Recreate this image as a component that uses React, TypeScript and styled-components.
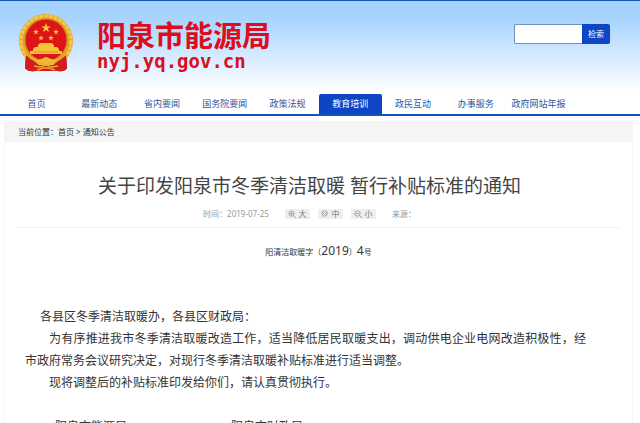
import React from "react";
import styled, { createGlobalStyle } from "styled-components";

const Global = createGlobalStyle`
  * { box-sizing: border-box; }
  html, body, #root { height: 100%; }
  body {
    margin: 0;
    background: #fff;
    color: #333;
    font-family: "Noto Sans", "Noto Sans CJK SC", sans-serif;
    overflow: hidden;
  }
  a { color: inherit; text-decoration: none; }
`;

const Page = styled.div`
  height: 100%;
  overflow: hidden;
`;

const Header = styled.header`
  display: flex;
  align-items: flex-start;
  height: 94px;
  padding: 10px 30px 0 17px;
  border-top: 1px solid #1556b0;
  background: linear-gradient(#a4d1fd 0, #a8d4fe 18px, #fcfeff 88px, #fff);
`;

const Brand = styled.div`
  margin-left: 22px;
  color: #dd0d20;
`;

const SiteName = styled.h1`
  margin: 6px 0 0;
  font-size: 29px;
  line-height: 34px;
  font-weight: 700;
  font-family: "Noto Sans CJK SC", sans-serif;
`;

const Domain = styled.div`
  font: bold 19px/20px "DejaVu Sans Mono", monospace;
`;

const Search = styled.form`
  display: flex;
  width: 96px;
  height: 20px;
  margin: 13px 0 0 auto;
`;

const SearchInput = styled.input`
  flex: 1;
  min-width: 0;
  border: 1px solid #7193bd;
  border-right: 0;
  border-radius: 2px 0 0 2px;
  background: #fff;
  font-size: 9px;
  outline: 0;
`;

const SearchButton = styled.button`
  width: 28px;
  padding: 0;
  border: 0;
  border-radius: 0 2px 2px 0;
  background: #0d45c5;
  color: #fff;
  font: 8px/18px "Noto Sans CJK SC", sans-serif;
`;

const Nav = styled.nav`
  display: grid;
  grid-template-columns: repeat(9, 1fr);
  padding: 0 70px 0 5px;
  border-bottom: 2px solid #1354bd;
`;

const NavLink = styled.a<{ $active?: boolean }>`
  height: 20px;
  border-radius: 2px 2px 0 0;
  background: ${(p) => (p.$active ? "#0d45c5" : "transparent")};
  color: ${(p) => (p.$active ? "#fff" : "#2b56a5")};
  font-size: 9px;
  line-height: 20px;
  text-align: center;
  white-space: nowrap;
`;

const Panel = styled.main`
  margin: 5px 7px 0 4px;
  border: 1px solid #f5f5f5;
  border-width: 0 1px;
  padding-bottom: 20px;
`;

const Crumbs = styled.div`
  padding: 0 13px;
  background: #f5f5f5;
  font-size: 8px;
  line-height: 21px;
`;

const Title = styled.h2`
  margin: 29px 0 0;
  padding-right: 18px;
  color: #444;
  font-size: 19px;
  line-height: 30px;
  font-weight: 400;
  text-align: center;
`;

const Meta = styled.div`
  display: flex;
  justify-content: center;
  align-items: center;
  gap: 8px;
  height: 27px;
  margin: 0 12px;
  padding: 0 18px 1px 0;
  border-bottom: 1px solid #f3f3f3;
  color: #999;
  font-size: 8px;
  line-height: 10px;
`;

const Stamp = styled.span`
  margin-right: 8px;
`;

const Source = styled.span`
  margin-left: 8px;
`;

const SizeButton = styled.button`
  display: flex;
  align-items: center;
  justify-content: center;
  gap: 2px;
  width: 25px;
  height: 10px;
  padding: 0;
  border: 0;
  background: #eee;
  color: #777;
  font: 8px/10px "Noto Sans CJK SC", sans-serif;
`;

const DocNumber = styled.p`
  margin: 13px 0 0;
  font-size: 8px;
  line-height: 20px;
  text-align: center;
`;

const Figure = styled.span`
  font-size: 12px;
`;

const Article = styled.article`
  margin-top: 44px;
  padding: 0 46px 0 20px;
  color: #333;
  font-size: 12px;
  line-height: 22px;
`;

const Salutation = styled.p`
  margin: 0;
  padding-left: 15px;
`;

const Paragraph = styled.p`
  margin: 0;
  text-indent: 24px;
  text-align: justify;
`;

const Signatures = styled.div`
  display: flex;
  gap: 104px;
  margin-top: 22px;
  padding-left: 30px;
`;

const nav = ["首页", "最新动态", "省内要闻", "国务院要闻", "政策法规", "教育培训", "政民互动", "办事服务", "政府网站年报"];

const Star = ({ x, y, r }: { x: number; y: number; r: number }) => {
  const points = Array.from({ length: 10 }, (_, i) => {
    const d = i % 2 ? r * 0.4 : r;
    const a = (Math.PI * i) / 5 - Math.PI / 2;
    return `${x + d * Math.cos(a)},${y + d * Math.sin(a)}`;
  }).join(" ");
  return <polygon points={points} fill="#fbc63c" />;
};

const Emblem = () => (
  <svg width="58" height="64" viewBox="0 0 58 64" role="img" aria-label="国徽">
    <path d="M9 42 L8 57 Q11 61 18 60 H41 Q48 61 50 57 L49 42Z" fill="#c91a1b" />
    <circle cx="29" cy="30" r="27" fill="#e0a428" />
    <circle cx="29" cy="30" r="25" fill="none" stroke="#f5c945" strokeWidth="3" strokeDasharray="4 1" />
    <circle cx="29" cy="29" r="21" fill="#de1517" stroke="#c9881c" />
    <Star x={29} y={17} r={5} />
    <Star x={19} y={21} r={3} />
    <Star x={39} y={21} r={3} />
    <Star x={24} y={27} r={3} />
    <Star x={34} y={27} r={3} />
    <path d="M21 34 L23 32 H35 L37 34 V36 H21Z M18 36 H40 L42 38 V40 H45 V43 H13 V40 H16 V38Z" fill="#f6c33a" />
    <path d="M17 41 H41" stroke="#d8921f" />
    <path d="M13 46 Q20 50 24 48 L29 46 L34 48 Q38 50 45 46 L42 50 Q36 53 29 53 Q22 53 16 50Z" fill="#e8af30" />
    <path d="M9 44 Q13 48 17 50 L22 54 H36 L41 50 Q45 48 49 44 L50 57 Q48 61 41 60 H18 Q11 61 8 57Z" fill="#d51b1b" />
    <path d="M18 49 Q23 50 29 46 Q35 50 40 49 Q36 53 29 53 Q22 53 18 49Z" fill="#efb935" />
    <path d="M17 55 L23 56 L29 54 L35 56 L41 55 M20 59 L26 57 H32 L38 59" fill="none" stroke="#e6ab35" strokeWidth="1.4" />
  </svg>
);

const Lens = ({ mark }: { mark: string }) => (
  <svg width="8" height="8" viewBox="0 0 9 9" fill="none" stroke="#999" aria-hidden="true">
    <circle cx="4" cy="4" r="3" />
    <path d={mark} />
  </svg>
);

export default function App() {
  return (
    <Page>
      <Global />
      <Header>
        <Emblem />
        <Brand>
          <SiteName>阳泉市能源局</SiteName>
          <Domain>nyj.yq.gov.cn</Domain>
        </Brand>
        <Search onSubmit={(e) => e.preventDefault()}>
          <SearchInput type="text" aria-label="检索" />
          <SearchButton type="submit">检索</SearchButton>
        </Search>
      </Header>
      <Nav>
        {nav.map((item) => (
          <NavLink key={item} href="#" $active={item === "教育培训"}>{item}</NavLink>
        ))}
      </Nav>
      <Panel>
        <Crumbs>
          当前位置：<a href="#">首页</a> &gt; <a href="#">通知公告</a>
        </Crumbs>
        <Title>关于印发阳泉市冬季清洁取暖 暂行补贴标准的通知</Title>
        <Meta>
          <Stamp>时间：2019-07-25</Stamp>
          <SizeButton type="button"><Lens mark="M6 6 L9 9 M2 4 H6 M4 2 V6" />大</SizeButton>
          <SizeButton type="button"><Lens mark="M2 3 L4 5 L7 2" />中</SizeButton>
          <SizeButton type="button"><Lens mark="M6 6 L9 9 M2 4 H6" />小</SizeButton>
          <Source>来源：</Source>
        </Meta>
        <DocNumber>
          阳清洁取暖字〔<Figure>2019</Figure>〕<Figure>4</Figure>号
        </DocNumber>
        <Article>
          <Salutation>各县区冬季清洁取暖办，各县区财政局：</Salutation>
          <Paragraph>
            为有序推进我市冬季清洁取暖改造工作，适当降低居民取暖支出，调动供电企业电网改造积极性，经市政府常务会议研究决定，对现行冬季清洁取暖补贴标准进行适当调整。
          </Paragraph>
          <Paragraph>现将调整后的补贴标准印发给你们，请认真贯彻执行。</Paragraph>
          <Signatures>
            <span>阳泉市能源局</span>
            <span>阳泉市财政局</span>
          </Signatures>
        </Article>
      </Panel>
    </Page>
  );
}
